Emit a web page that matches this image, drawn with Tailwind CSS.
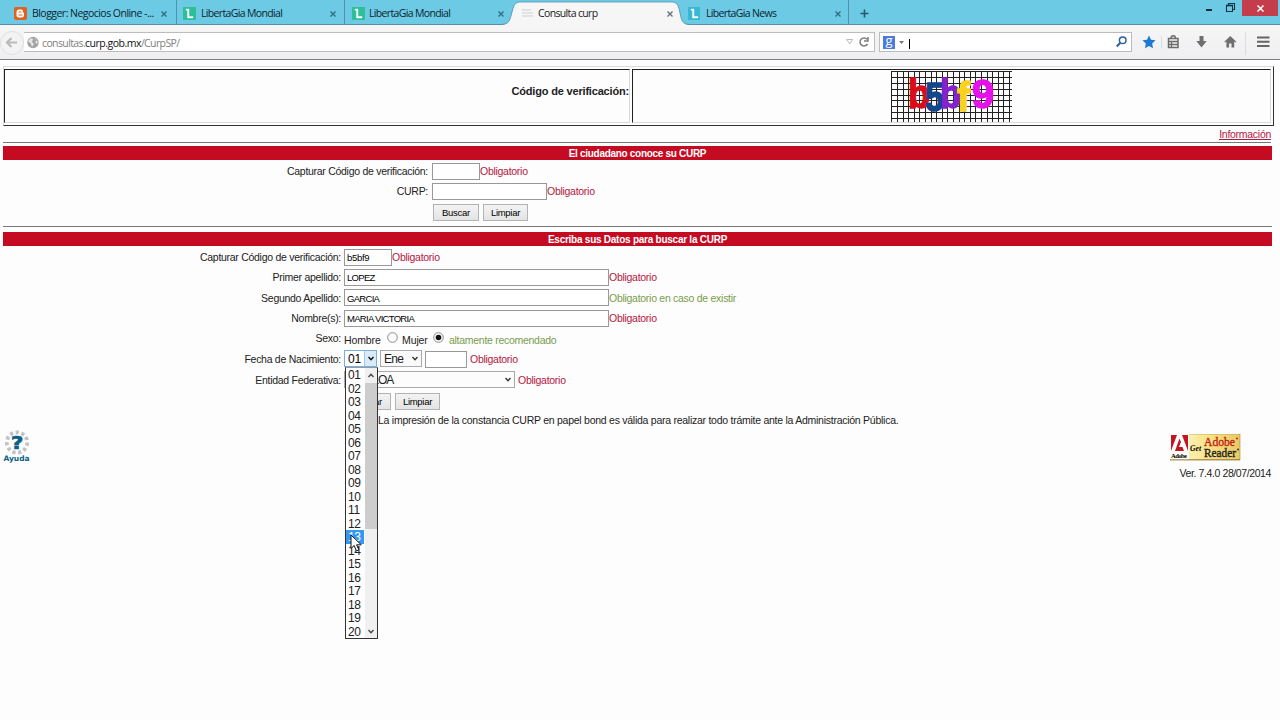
<!DOCTYPE html>
<html lang="es">
<head>
    <meta charset="UTF-8">
    <meta name="viewport" content="width=device-width, initial-scale=1.0">
    <title>Consulta curp</title>
    <script src="https://cdn.jsdelivr.net/npm/@tailwindcss/browser@4"></script>
</head>
<body class="relative h-[720px] w-[1280px] overflow-hidden bg-[#fdfdfd] font-['Liberation_Sans',sans-serif] text-[10.5px] leading-none tracking-[-0.28px] text-[#222]">
    <!-- Tab strip -->
    <div class="relative flex h-[25px] border-b border-[#5590a8] bg-[#6ccae4] font-['Open_Sans',sans-serif] text-[10.5px] tracking-[-0.65px] text-[#0c2430]">
        <div class="flex h-[24px] w-[177px] items-center border-r border-[#4d93ad] pl-[14px] pt-[3px]">
            <svg class="mr-[5px] shrink-0" width="13" height="13" viewBox="0 0 13 13"><rect width="13" height="13" rx="2" fill="#e2611c"/><path d="M5 2.500h2a2 2 0 0 1 2 2c0 1.200.5 1.300 1 1.300v2.200a2.500 2.500 0 0 1-2.500 2.500H5A2.500 2.500 0 0 1 2.500 8V5A2.500 2.500 0 0 1 5 2.500z" fill="#fff"/><path d="M5 5h2M5 8h3" stroke="#e2611c" stroke-width="1.200" stroke-linecap="round"/></svg>
            <span class="w-[125px] whitespace-nowrap tracking-[-0.53px]">Blogger: Negocios Online -...</span>
            <svg class="ml-[4px]" width="6" height="6" viewBox="0 0 6 6"><path d="M.5.5l5 5M5.500.5l-5 5" stroke="#2f6d85" stroke-width="1.400"/></svg>
        </div>
        <div class="flex h-[24px] w-[168px] items-center border-r border-[#4d93ad] pl-[6px] pt-[3px]">
            <svg class="mr-[5px] shrink-0" width="13" height="13" viewBox="0 0 13 13"><rect width="13" height="13" fill="#2fbf98"/><path d="M3 2h3v7.500h4V11H4.500V3.300H3z" fill="#fff" stroke="#fff" stroke-width=".4"/></svg>
            <span class="w-[129px] whitespace-nowrap">LibertaGia Mondial</span>
            <svg width="6" height="6" viewBox="0 0 6 6"><path d="M.5.5l5 5M5.500.5l-5 5" stroke="#2f6d85" stroke-width="1.400"/></svg>
        </div>
        <div class="flex h-[24px] w-[168px] items-center pl-[7px] pt-[3px]">
            <svg class="mr-[4px] shrink-0" width="13" height="13" viewBox="0 0 13 13"><rect width="13" height="13" fill="#2fbf98"/><path d="M3 2h3v7.500h4V11H4.500V3.300H3z" fill="#fff" stroke="#fff" stroke-width=".4"/></svg>
            <span class="w-[129px] whitespace-nowrap">LibertaGia Mondial</span>
            <svg width="6" height="6" viewBox="0 0 6 6"><path d="M.5.5l5 5M5.500.5l-5 5" stroke="#2f6d85" stroke-width="1.400"/></svg>
        </div>
        <div class="relative flex h-[25px] w-[168px] items-center pl-[9px] pt-[2px]">
            <svg class="absolute -left-[12px] top-0" width="189" height="25" viewBox="0 0 189 25"><path d="M0 25c6-.5 8-2 9.500-7l2.500-9c1.500-5 3-7 8-7h150c5 0 6.500 2 8 7l2 9c1.500 5 3.500 6.500 9 7z" fill="#f7f6f7"/><path d="M0 24.500c6-.5 8-2 9.500-7l2.500-9c1.500-5 3-6.500 8-6.500h150c5 0 6.500 1.500 8 6.500l2 9c1.500 5 3.500 6.500 9 7" fill="none" stroke="#5590a8" stroke-width=".8"/></svg>
            <svg class="relative mr-[5px] shrink-0" width="11" height="11" viewBox="0 0 11 11"><path d="M0 2h9M0 5h11M0 8h11" stroke="#dcdcdc" stroke-width="1.600"/></svg>
            <span class="relative w-[129px] whitespace-nowrap text-[#222]">Consulta curp</span>
            <svg class="relative" width="6" height="6" viewBox="0 0 6 6"><path d="M.5.5l5 5M5.500.5l-5 5" stroke="#67717a" stroke-width="1.400"/></svg>
        </div>
        <div class="relative flex h-[24px] w-[168px] items-center border-r border-[#4d93ad] pl-[7px] pt-[3px]">
            <svg class="mr-[6px] shrink-0" width="12" height="13" viewBox="0 0 12 13"><rect width="12" height="13" fill="#37b9d6"/><path d="M3 2h3v7.500h4V11H4.500V3.300H3z" fill="#fff" stroke="#fff" stroke-width=".4"/></svg>
            <span class="w-[129px] whitespace-nowrap">LibertaGia News</span>
            <svg width="6" height="6" viewBox="0 0 6 6"><path d="M.5.5l5 5M5.500.5l-5 5" stroke="#2f6d85" stroke-width="1.400"/></svg>
        </div>
        <svg class="ml-[11px] mt-[9px]" width="9" height="9" viewBox="0 0 9 9"><path d="M4.500.5v8M.5 4.500h8" stroke="#23576d" stroke-width="1.600"/></svg>
        <!-- Window buttons -->
        <div class="ml-auto mr-[2px] flex h-[16px]">
            <svg width="33" height="16" viewBox="0 0 33 16"><path d="M0 10h6" stroke="#12303d" stroke-width="2"/><path d="M20.500 5.500h6v6h-6zM22.500 5V3.500h6v6H27" fill="none" stroke="#12303d" stroke-width="1.100"/><path d="M20 5.500h7" stroke="#12303d" stroke-width="1.600"/></svg>
            <div class="ml-[3px] flex w-[36px] items-center justify-center bg-[#c43d4c]">
                <svg width="7" height="7" viewBox="0 0 7 7"><path d="M.5.5l6 6M6.500.5l-6 6" stroke="#fff" stroke-width="1.500"/></svg>
            </div>
        </div>
    </div>

    <!-- Navigation toolbar -->
    <div class="flex h-[35px] items-start border-b border-[#7d7d7f] bg-linear-to-b from-[#f7f6f7] to-[#efeef0] font-['Open_Sans',sans-serif] text-[10.5px]">
        <svg class="relative -mr-[24px] mt-[4px] shrink-0" width="48" height="28" viewBox="0 0 48 28"><circle cx="12" cy="14" r="11.500" fill="#f4f3f4" stroke="#dedee0"/><path d="M7 13.500h10M11.500 9L7 13.500l4.500 4.500" fill="none" stroke="#b9b9bb" stroke-width="2.200"/><circle cx="33" cy="13.500" r="5.700" fill="#a3a3a3"/><path d="M28 12l3-3 2 1-1 3 2 2-2 3-1-3zM34 9l3 2-2 2 2 2 1-2" fill="#e4e4e4"/></svg>
        <div class="mt-[7px] flex h-[20px] w-[851px] items-center border border-l-0 border-[#bcbcbe] bg-white pl-[18px]">
            <span class="w-[804px] whitespace-nowrap pt-[2px] tracking-[-0.62px] text-[#808080]">consultas.<span class="tracking-[-0.5px] text-[#111]">curp.gob.mx</span>/CurpSP/</span>
            <svg class="shrink-0" width="24" height="12" viewBox="0 0 24 12"><path d="M.7 3.500h6L3.700 8z" fill="none" stroke="#bbb"/><path d="M21 3.200A4 4 0 1 0 21.500 8M22 1v4h-4" fill="none" stroke="#7d7d7d" stroke-width="1.500"/></svg>
        </div>
        <div class="ml-[4px] mt-[7px] flex h-[20px] w-[253px] items-center border border-[#bcbcbe] bg-white pl-[3px]">
            <div class="flex h-[13px] w-[12px] items-center justify-center bg-[#4a7be0] text-[13px] text-white"><span class="-mt-[4px]">g</span></div>
            <svg class="ml-[4px]" width="5" height="3" viewBox="0 0 5 3"><path d="M0 0h5L2.500 3z" fill="#777"/></svg>
            <div class="ml-[5px] mt-[3px] h-[10px] w-px bg-black"></div>
            <svg class="ml-auto mr-[4px]" width="11" height="12" viewBox="0 0 11 12"><circle cx="6.700" cy="4.200" r="3.300" fill="none" stroke="#2d629d" stroke-width="1.500"/><path d="M4.300 6.800L.8 10.500" stroke="#2d629d" stroke-width="2"/></svg>
        </div>
        <svg class="mt-[7px]" width="148" height="24" viewBox="0 0 148 24"><path d="M17 3.500l2 4.200 4.500.6-3.300 3.200.8 4.800-4-2.300-4 2.300.8-4.800-3.300-3.200 4.500-.6z" fill="#1d79cf"/><path d="M29.500 4v12" stroke="#d2dde5"/><path d="M36.500 6.500h9.500v9h-9.500z" fill="none" stroke="#6b6b6b" stroke-width="1.500"/><path d="M39 6c0-3 4.500-3 4.500 0M37 9.500h9M37 12.500h9M39.500 9v6" fill="none" stroke="#6b6b6b" stroke-width="1.300"/><path d="M67.500 4h4v5h3.200l-5.200 6.500L64.300 9h3.200z" fill="#6f6f6f"/><path d="M98.300 4l6 5.700-.9.900-1.200-1v6h-2.700v-4h-2.400v4h-2.700v-6l-1.200 1-.9-.9z" fill="#6f6f6f"/><path d="M113.500 0v23" stroke="#dcdcde"/><path d="M125 5.500h12.500M125 9.800h12.500M125 14.100h12.500" stroke="#666" stroke-width="2"/></svg>
    </div>

    <main class="pl-[3px]">
        <!-- Captcha table -->
        <div class="mt-[6px] h-[60px] w-[1271px] border border-t-[#dadada] border-r-[#333] border-b-[#333] border-l-[#dadada] p-[2px]">
            <div class="-ml-[2px] flex h-[54px] gap-[2px]">
                <div class="flex w-[626px] items-start justify-end border border-t-[#222] border-r-[#dadada] border-b-[#dadada] border-l-[#222] pt-[16px] text-[11px] font-bold tracking-[-0.18px]">Código de verificación:</div>
                <div class="flex flex-1 justify-center border border-t-[#222] border-r-[#dadada] border-b-[#dadada] border-l-[#222] pr-px pt-[1px]">
                    <svg width="121" height="51" viewBox="0 0 121 51" class="font-bold tracking-normal">
                        <path d="M.5 0v51M6.500 0v51M12.500 0v51M17.500 0v51M23.500 0v51M28.500 0v51M34.500 0v51M40.500 0v51M45.500 0v51M51.500 0v51M56.500 0v51M62.500 0v51M68.500 0v51M73.500 0v51M79.500 0v51M84.500 0v51M90.500 0v51M96.500 0v51M101.500 0v51M107.500 0v51M112.500 0v51M118.500 0v51M0 .5h121M0 6.500h121M0 12.500h121M0 18.500h121M0 24.500h121M0 29.500h121M0 35.500h121M0 41.500h121M0 47.500h121" stroke="#222"/>
                        <g font-size="40" stroke-width="1.400">
                            <text x="17" y="37" textLength="22" lengthAdjust="spacingAndGlyphs" fill="#d90c19" stroke="#d90c19">b</text>
                            <text x="34" y="40" textLength="19" lengthAdjust="spacingAndGlyphs" fill="#15468a" stroke="#15468a">5</text>
                            <text x="49" y="37" textLength="21" lengthAdjust="spacingAndGlyphs" fill="#8422ce" stroke="#8422ce">b</text>
                            <text x="66" y="40" textLength="13" lengthAdjust="spacingAndGlyphs" fill="#f9d21f" stroke="#f9d21f">f</text>
                            <text x="81" y="37" textLength="22" lengthAdjust="spacingAndGlyphs" font-size="41" fill="#e510ea" stroke="#e510ea">9</text>
                        </g>
                    </svg>
                </div>
            </div>
        </div>
        <div class="flex h-[16px] w-[1268px] justify-end pt-[3px]"><a class="h-[11px] border-b border-[#b5173f] text-[#b5173f]">Información</a></div>
        <div class="h-px w-[1268px] bg-[#777]"></div>

        <!-- Known CURP form -->
        <div class="mt-[3px] flex h-[14px] w-[1269px] items-center justify-center bg-[#c40b22] pt-[2px] text-[10px] font-bold tracking-[-0.3px] text-white">El ciudadano conoce su CURP</div>
        <div class="mt-[3px] grid grid-cols-[425px_1fr] gap-x-[4px]">
            <div class="flex h-[17px] items-center justify-end">Capturar Código de verificación:</div>
            <div class="flex h-[20px] items-start"><div class="h-[17px] w-[48px] border border-[#999] bg-white"></div><span class="pt-[3px] text-[#b5173f]">Obligatorio</span></div>
            <div class="flex h-[17px] items-center justify-end">CURP:</div>
            <div class="flex h-[21px] items-start"><div class="h-[17px] w-[115px] border border-[#999] bg-white"></div><span class="pt-[3px] text-[#b5173f]">Obligatorio</span></div>
            <div></div>
            <div class="flex gap-[4px] pl-[1px] text-[9.500px] text-black">
                <button class="h-[17px] w-[46px] border border-[#b3b3b3] bg-linear-to-b from-[#f3f3f3] to-[#e4e4e4]">Buscar</button>
                <button class="h-[17px] w-[45px] border border-[#b3b3b3] bg-linear-to-b from-[#f3f3f3] to-[#e4e4e4]">Limpiar</button>
            </div>
        </div>
        <div class="mt-[5px] h-px w-[1269px] bg-[#777]"></div>

        <!-- Search by personal data -->
        <div class="mt-[5px] flex h-[14px] w-[1269px] items-center justify-center bg-[#c40b22] pt-[2px] text-[10px] font-bold tracking-[-0.25px] text-white">Escriba sus Datos para buscar la CURP</div>
        <div class="mt-[3px] grid grid-cols-[338px_1fr] gap-x-[3px]">
            <div class="flex h-[17px] items-center justify-end">Capturar Código de verificación:</div>
            <div class="flex h-[20px] items-start"><div class="flex h-[17px] w-[48px] items-center border border-[#999] bg-white pl-[2px] pt-px text-[9.500px] text-black">b5bf9</div><span class="pt-[3px] text-[#b5173f]">Obligatorio</span></div>
            <div class="flex h-[17px] items-center justify-end">Primer apellido:</div>
            <div class="flex h-[20px] items-start"><div class="flex h-[17px] w-[265px] items-center border border-[#999] bg-white pl-[2px] pt-px text-[9.500px] tracking-[-0.7px] text-black">LOPEZ</div><span class="pt-[3px] text-[#b5173f]">Obligatorio</span></div>
            <div class="flex h-[17px] items-center justify-end pt-px">Segundo Apellido:</div>
            <div class="flex h-[21px] items-start"><div class="flex h-[17px] w-[265px] items-center border border-[#999] bg-white pl-[2px] pt-[2px] text-[9.500px] tracking-[-0.7px] text-black">GARCIA</div><span class="pt-[4px] text-[#7a9c4c]">Obligatorio en caso de existir</span></div>
            <div class="flex h-[17px] items-center justify-end">Nombre(s):</div>
            <div class="flex h-[21px] items-start"><div class="flex h-[17px] w-[265px] items-center border border-[#999] bg-white pl-[2px] pt-px text-[9.500px] tracking-[-0.7px] text-black">MARIA VICTORIA</div><span class="pt-[3px] text-[#b5173f]">Obligatorio</span></div>
            <div class="flex h-[15px] items-center justify-end">Sexo:</div>
            <div class="flex h-[19px] items-start">
                <span class="w-[43px] shrink-0 pt-[4px] tracking-[-0.1px]">Hombre</span>
                <svg class="shrink-0" width="11" height="12" viewBox="0 0 11 12"><circle cx="5.500" cy="6.500" r="4.800" fill="#fff" stroke="#888"/></svg>
                <span class="w-[35px] shrink-0 pl-[4px] pt-[4px] tracking-[-0.1px]">Mujer</span>
                <svg class="shrink-0" width="11" height="12" viewBox="0 0 11 12"><circle cx="5.500" cy="6.500" r="4.800" fill="#fff" stroke="#888"/><circle cx="5.500" cy="6.500" r="2.800" fill="#111"/></svg>
                <span class="pl-[5px] pt-[4px] text-[#7a9c4c]">altamente recomendado</span>
            </div>
            <div class="flex h-[17px] items-center justify-end pt-px">Fecha de Nacimiento:</div>
            <div class="flex h-[21px] items-start">
                <div class="flex h-[17px] w-[33px] items-center border border-[#77b0dd] bg-white pl-[3px] text-[12px] text-black">
                    <span class="w-[16px] pt-px">01</span>
                    <div class="flex h-[15px] flex-1 items-center justify-center border-l border-[#9fc9ec] bg-[#d9ebfa]"><svg width="6" height="5" viewBox="0 0 6 5"><path d="M.5 1L3 3.700 5.500 1" fill="none" stroke="#111" stroke-width="1.500"/></svg></div>
                </div>
                <div class="ml-[3px] flex h-[17px] w-[42px] items-center justify-between border border-[#aaa] bg-[#fafafa] px-[3px] text-[12px]"><span class="pt-px tracking-[-0.7px]">Ene</span><svg width="6" height="5" viewBox="0 0 6 5"><path d="M.5 1L3 3.700 5.500 1" fill="none" stroke="#333" stroke-width="1.400"/></svg></div>
                <div class="ml-[3px] mt-[1px] h-[17px] w-[42px] border border-[#999] bg-white"></div>
                <span class="pl-[3px] pt-[4px] text-[#b5173f]">Obligatorio</span>
            </div>
            <div class="flex h-[17px] items-center justify-end pt-px">Entidad Federativa:</div>
            <div class="flex h-[22px] items-start">
                <div class="flex h-[17px] w-[171px] items-center justify-between border border-[#aaa] bg-[#fcfcfc] px-[3px] text-[12px]"><span class="pt-px tracking-[-0.95px]">SINALOA</span><svg width="6" height="5" viewBox="0 0 6 5"><path d="M.5 1L3 3.700 5.500 1" fill="none" stroke="#333" stroke-width="1.400"/></svg></div>
                <span class="pl-[3px] pt-[4px] text-[#b5173f]">Obligatorio</span>
            </div>
            <div></div>
            <div class="flex gap-[4px] pl-[1px] text-[9.500px] text-black">
                <button class="h-[17px] w-[46px] border border-[#b3b3b3] bg-linear-to-b from-[#f3f3f3] to-[#e4e4e4]">Buscar</button>
                <button class="h-[17px] w-[45px] border border-[#b3b3b3] bg-linear-to-b from-[#f3f3f3] to-[#e4e4e4]">Limpiar</button>
            </div>
        </div>
        <p class="mt-[5px] pl-[375px] tracking-[-0.26px]">La impresión de la constancia CURP en papel bond es válida para realizar todo trámite ante la Administración Pública.</p>

        <!-- Help and reader badges -->
        <div class="mt-[4px] flex h-[37px] w-[1268px] justify-between">
            <div class="w-[28px] text-center text-[#0d5f86]">
                <svg class="mx-auto" width="26" height="26" viewBox="0 0 26 26"><circle cx="13" cy="12.500" r="10.200" fill="none" stroke="#c2c2c6" stroke-width="3.800" stroke-dasharray="3.200 2.600"/><text x="13" y="18.500" text-anchor="middle" font-size="17" font-weight="bold" textLength="12" lengthAdjust="spacingAndGlyphs" fill="#0d5f86" stroke="#0d5f86" stroke-width=".7" font-family="DejaVu Sans">?</text></svg>
                <div class="-ml-px -mt-[1px] font-['DejaVu_Sans',sans-serif] text-[7.500px] font-bold tracking-normal">Ayuda</div>
            </div>
            <svg class="mr-[30px] mt-[4px] tracking-normal" width="71" height="27" viewBox="0 0 71 27" font-family="Liberation Serif">
                <defs><linearGradient id="gold"><stop stop-color="#fffbe1"/><stop offset=".5" stop-color="#f9e68c"/><stop offset="1" stop-color="#e9c962"/></linearGradient></defs>
                <rect x="0" y="0" width="70" height="26" fill="url(#gold)" stroke="#a88a3a" stroke-width=".6"/>
                <path d="M0 0h19v26H0z" fill="#fffef5"/>
                <path d="M0 25.700h70" stroke="#8f7a3c" stroke-width=".8"/>
                <path d="M1 1h17v16H1z" fill="#c31525"/><path d="M7 1h5l6 16h-4l-1.500-4H9l2-5-1.500-3.500L5 17H1z" fill="#fff"/>
                <text x="1" y="24" font-size="6.500" font-weight="bold" textLength="16">Adobe</text>
                <text x="20" y="17" font-size="8.500" font-weight="bold" font-style="italic" textLength="11" lengthAdjust="spacingAndGlyphs">Get</text>
                <text x="34" y="12" font-size="13" fill="#c31e1e" stroke="#c31e1e" stroke-width=".4" textLength="31" lengthAdjust="spacingAndGlyphs">Adobe</text>
                <text x="34" y="23" font-size="13" fill="#222" stroke="#222" stroke-width=".4" textLength="32" lengthAdjust="spacingAndGlyphs">Reader</text>
                <circle cx="67" cy="4.500" r="1" fill="#c31e1e"/><circle cx="68" cy="15.500" r="1" fill="#333"/>
            </svg>
        </div>
        <div class="mt-[1px] w-[1268px] text-right tracking-[-0.4px]">Ver. 7.4.0 28/07/2014</div>
    </main>

    <!-- Open day list -->
    <div class="absolute left-[345px] top-[367px] flex h-[272px] w-[33px] justify-between border border-[#333] border-t-[#999] bg-white text-[12px] tracking-[-0.4px] text-[#222]">
        <ul class="w-[18px] *:flex *:h-[13.500px] *:items-center *:pl-[2px] *:pt-px">
            <li>01</li><li>02</li><li>03</li><li>04</li><li>05</li><li>06</li><li>07</li><li>08</li><li>09</li><li>10</li>
            <li>11</li><li>12</li><li class="bg-[#3399f5] text-white">13</li><li>14</li><li>15</li><li>16</li><li>17</li><li>18</li><li>19</li><li>20</li>
        </ul>
        <div class="flex w-[12px] flex-col items-center bg-[#f0f0f0]">
            <svg class="my-[5px]" width="6" height="5" viewBox="0 0 6 5"><path d="M.5 4L3 1.300 5.500 4" fill="none" stroke="#444" stroke-width="1.400"/></svg>
            <div class="h-[146px] w-full bg-[#cdcdcd]"></div>
            <svg class="mb-[4px] mt-auto" width="6" height="5" viewBox="0 0 6 5"><path d="M.5 1L3 3.700 5.500 1" fill="none" stroke="#444" stroke-width="1.400"/></svg>
        </div>
    </div>
    <!-- Pointer -->
    <svg class="absolute left-[350px] top-[534px]" width="13" height="19" viewBox="0 0 13 19"><path d="M1 1v13.500l3.200-3 2.200 5.500 2.500-1-2.300-5.200h4.700z" fill="#fff" stroke="#111"/></svg>
</body>
</html>
